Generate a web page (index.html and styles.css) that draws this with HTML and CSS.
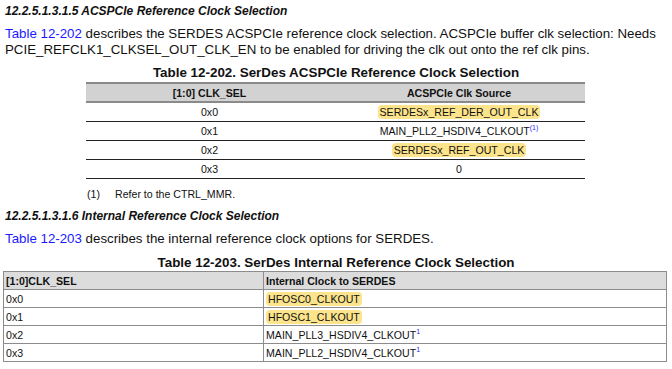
FILE: index.html
```html
<!DOCTYPE html>
<html>
<head>
<meta charset="utf-8">
<link rel="stylesheet" href="styles.css">
</head>
<body>
<div class="page">
  <h3 class="sec-head">12.2.5.1.3.1.5 ACSPCIe Reference Clock Selection</h3>
  <p class="para"><span class="link">Table 12-202</span> describes the SERDES ACSPCIe reference clock selection. ACSPCIe buffer clk selection: Needs PCIE_REFCLK1_CLKSEL_OUT_CLK_EN to be enabled for driving the clk out onto the ref clk pins.</p>
  <div class="tbl-title">Table 12-202. SerDes ACSPCIe Reference Clock Selection</div>
  <table class="t1">
    <thead>
      <tr><th>[1:0] CLK_SEL</th><th>ACSPCIe Clk Source</th></tr>
    </thead>
    <tbody>
      <tr><td>0x0</td><td><span class="hl">SERDESx_REF_DER_OUT_CLK</span></td></tr>
      <tr><td>0x1</td><td>MAIN_PLL2_HSDIV4_CLKOUT<sup class="fn">(1)</sup></td></tr>
      <tr><td>0x2</td><td><span class="hl">SERDESx_REF_OUT_CLK</span></td></tr>
      <tr><td>0x3</td><td>0</td></tr>
    </tbody>
  </table>
  <div class="footnote"><span class="fn-num">(1)</span><span>Refer to the CTRL_MMR.</span></div>
  <h3 class="sec-head sec-head2">12.2.5.1.3.1.6 Internal Reference Clock Selection</h3>
  <p class="para para2"><span class="link">Table 12-203</span> describes the internal reference clock options for SERDES.</p>
  <div class="tbl-title tbl-title2">Table 12-203. SerDes Internal Reference Clock Selection</div>
  <table class="t2">
    <thead>
      <tr><th class="c1">[1:0]CLK_SEL</th><th>Internal Clock to SERDES</th></tr>
    </thead>
    <tbody>
      <tr><td>0x0</td><td><span class="hl">HFOSC0_CLKOUT</span></td></tr>
      <tr><td>0x1</td><td><span class="hl">HFOSC1_CLKOUT</span></td></tr>
      <tr><td>0x2</td><td>MAIN_PLL3_HSDIV4_CLKOUT<sup class="fn">1</sup></td></tr>
      <tr><td>0x3</td><td>MAIN_PLL2_HSDIV4_CLKOUT<sup class="fn">1</sup></td></tr>
    </tbody>
  </table>
</div>
</body>
</html>
```
FILE: styles.css
```css
html, body {
  margin: 0;
  padding: 0;
  background: #ffffff;
}
body {
  font-family: "Liberation Sans", Arial, sans-serif;
  color: #111111;
  width: 672px;
  height: 369px;
  overflow: hidden;
}
.page {
  padding: 4px 0 0 0;
}
.sec-head {
  margin: 0 0 0 5px;
  font-size: 12px;
  line-height: 14px;
  font-weight: bold;
  font-style: italic;
}
.para {
  margin: 8px 0 0 5px;
  font-size: 13.3px;
  line-height: 16px;
  width: 664px;
}
.link {
  color: #1a1aff;
}
.tbl-title {
  margin-top: 7px;
  text-align: center;
  font-size: 13.4px;
  line-height: 16px;
  font-weight: bold;
}
table {
  border-collapse: collapse;
  font-size: 10.6px;
}
.t1 {
  width: 499px;
  margin: 1px 0 0 86px;
  table-layout: fixed;
}
.t1 th {
  background: #d2d2d2;
  border-top: 2px solid #8a8a8a;
  border-bottom: 2px solid #8a8a8a;
  height: 17px;
  padding: 0;
  font-weight: bold;
  text-align: center;
}
.t1 td {
  height: 18px;
  padding: 0;
  text-align: center;
  border-bottom: 1px solid #222222;
}
.t1 td:first-child, .t1 th:first-child {
  width: 247px;
}
.hl {
  background: #fce48c;
  border-radius: 4px;
  padding: 1px 2px;
}
.fn {
  color: #2a2aff;
  font-size: 7px;
  vertical-align: top;
  line-height: 8px;
  position: relative;
  top: -1px;
}
.footnote {
  display: flex;
  margin: 9px 0 0 87px;
  font-size: 10.6px;
  line-height: 12px;
}
.fn-num {
  width: 28px;
}
.sec-head2 {
  margin-top: 9px;
}
.para2 {
  margin-top: 8px;
}
.tbl-title2 {
  margin-top: 8px;
}
.t2 {
  width: 664px;
  margin: 0 0 0 3px;
  table-layout: fixed;
  border: 1px solid #777777;
}
.t2 th, .t2 td {
  border: 1px solid #8c8c8c;
  padding: 0 2px;
  text-align: left;
  height: 17px;
}
.t2 th {
  background: #dcdcdc;
  font-weight: bold;
}
.t2 .c1 {
  width: 255px;
}
```
